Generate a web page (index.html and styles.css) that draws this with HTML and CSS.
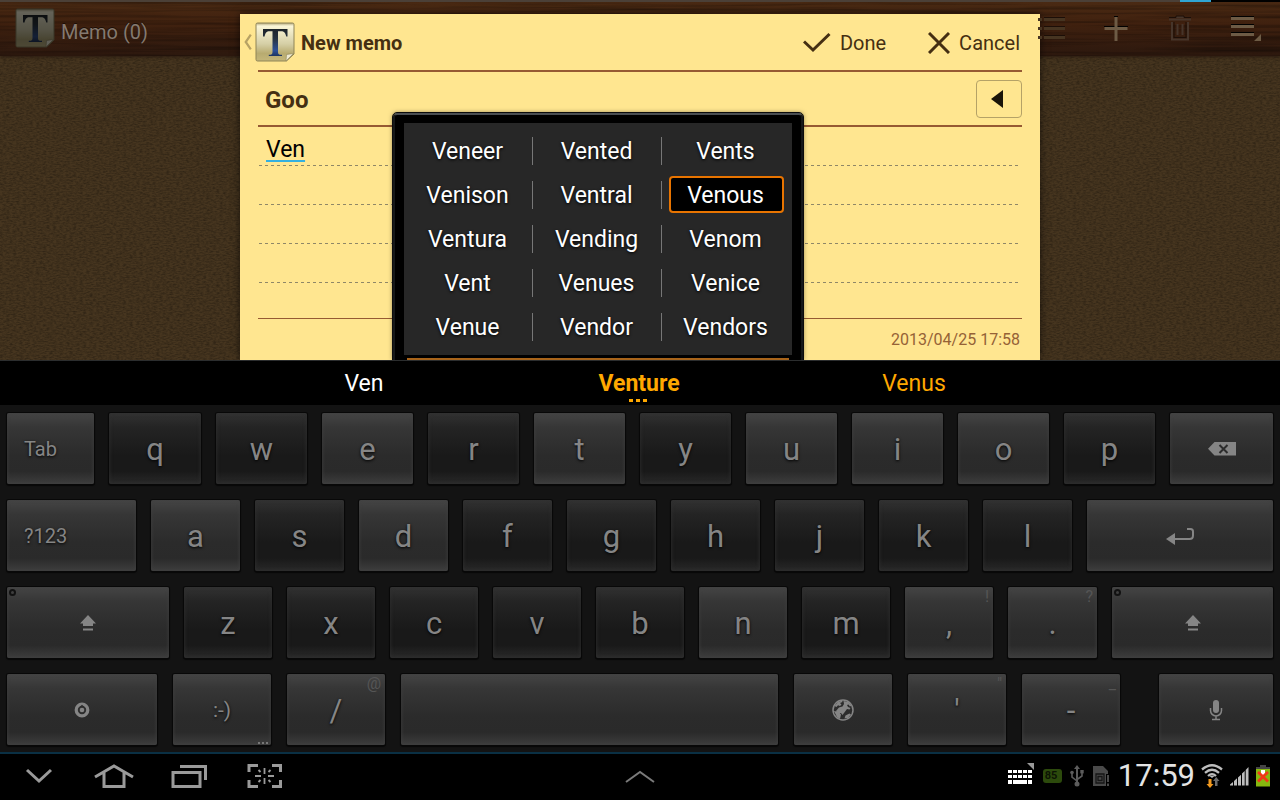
FILE: index.html
```html
<!DOCTYPE html>
<html lang="en">
<head>
<meta charset="utf-8">
<meta name="viewport" content="width=device-width, initial-scale=1">
<title>Memo</title>
<link rel="stylesheet" href="styles.css">
</head>
<body>
<svg class="defs" width="0" height="0" aria-hidden="true">
  <defs>
    <linearGradient id="paper" x1="0" y1="0" x2="0" y2="1">
      <stop offset="0" stop-color="#b3a77b"/><stop offset=".08" stop-color="#fbf6d8"/><stop offset=".55" stop-color="#d5cfa6"/><stop offset=".8" stop-color="#b8ab70"/><stop offset="1" stop-color="#c4b67a"/>
    </linearGradient>
    <linearGradient id="ink" x1="0" y1="0" x2="0" y2="1">
      <stop offset="0" stop-color="#1d2329"/><stop offset=".35" stop-color="#26323f"/><stop offset=".8" stop-color="#2a4f97"/><stop offset="1" stop-color="#1d3560"/>
    </linearGradient>
    <symbol id="memo-icon" viewBox="0 0 40 40">
      <path d="M2.500 1h35a1.500 1.500 0 0 1 1.500 1.500V32l-7.500 7h-29A1.500 1.500 0 0 1 1 37.500v-35A1.500 1.500 0 0 1 2.500 1z" fill="url(#paper)" stroke="#8e8456"/>
      <path d="M31 39l.5-6.500 7-1z" fill="#efead2" stroke="#8e8456" stroke-width=".6"/>
      <path d="M8 7h24.500v7.500h-1.300c-.7-3.700-2-5.300-5.200-5.300h-3v20.500c0 2.300.8 3 4 3.100V34H13.800v-1.200c3-.1 3.700-.8 3.700-3.100V9.200h-3c-3 0-4.200 1.600-4.900 5.300H8z" fill="url(#ink)"/>
    </symbol>
    <symbol id="shift-icon" viewBox="0 0 18 18">
      <path d="M9 1l8 8.500h-3V12H4V9.500H1z"/><path d="M4 14.500h10v2H4z"/>
    </symbol>
  </defs>
</svg>

<main class="stage">
  <svg class="texture cork" aria-hidden="true">
    <filter id="grain"><feTurbulence type="fractalNoise" baseFrequency=".3 .7" numOctaves="2" seed="4"/><feColorMatrix values="0 0 0 0 0  0 0 0 0 0  0 0 0 0 0  1.200 0 0 0 -.42"/></filter>
    <rect width="100%" height="100%" filter="url(#grain)"/>
  </svg>
  <header class="appbar">
    <svg class="texture wood" aria-hidden="true">
      <filter id="wood"><feTurbulence type="fractalNoise" baseFrequency=".006 .3" numOctaves="3" seed="8"/><feColorMatrix values="0 0 0 0 0  0 0 0 0 0  0 0 0 0 0  2 0 0 0 -.8"/></filter>
      <rect width="100%" height="100%" filter="url(#wood)"/>
    </svg>
    <svg class="app-icon" aria-hidden="true"><use href="#memo-icon"/></svg>
    <h1 class="app-title">Memo (0)</h1>
    <div class="app-actions">
      <button aria-label="List view"><svg width="28" height="28" viewBox="0 0 28 28" fill="#463421"><path d="M0 4h4v3H0zM6 4h21v3H6zM0 13h4v3H0zM6 13h21v3H6zM0 22h4v3H0zM6 22h21v3H6z"/><path d="M6 3h21v1H6zM6 12h21v1H6zM6 21h21v1H6z" fill="#1c0e07"/></svg></button>
      <button aria-label="Add memo"><svg width="28" height="28" viewBox="0 0 28 28"><path d="M12 2h4v1h-4zM2 12h24v1H2z" fill="#000"/><path d="M12.500 3h3v24h-3z" fill="#6d5b45"/><path d="M2.500 13h23v3h-23z" fill="#6d5b45"/></svg></button>
      <button aria-label="Delete"><svg width="28" height="28" viewBox="0 0 28 28" fill="none" stroke="#46352a" stroke-width="2"><path d="M3 5.500h22M10 3h8M6 8v17.500h16V8"/><path d="M11.500 10v11M16.500 10v11"/><path d="M3 3.500h7V2h8v1.500h7M8 8v15.500h12V8" stroke="#1c0e07" stroke-width="1"/></svg></button>
      <button aria-label="Menu"><svg width="32" height="28" viewBox="0 0 32 28" fill="#6d5b45"><path d="M1 3h23v3H1zM1 11h23v3H1zM1 19h23v3H1zM31 20v7h-7z"/><path d="M1 2h23v1H1zM1 10h23v1H1zM1 18h23v1H1z" fill="#000"/></svg></button>
    </div>
  </header>
  <div class="progress"></div>

  <section class="memo">
    <header class="memo-head">
      <svg class="back" viewBox="0 0 8 16" aria-hidden="true"><path d="M6.500 1.500L2 8l4.500 6.500" fill="none" stroke="#b7a264" stroke-width="2"/></svg>
      <svg class="app-icon" aria-hidden="true"><use href="#memo-icon"/></svg>
      <h2>New memo</h2>
      <button class="memo-action"><svg width="28" height="22" viewBox="0 0 28 22" fill="none" stroke="#452f12" stroke-width="3"><path d="M1 9.500l9 8.500L26.500 2"/></svg>Done</button>
      <button class="memo-action"><svg width="22" height="22" viewBox="0 0 22 22" fill="none" stroke="#452f12" stroke-width="3"><path d="M1 1l20 20M21 1L1 21"/></svg>Cancel</button>
    </header>
    <div class="memo-title">
      <input type="text" value="Goo" aria-label="Memo title">
      <button class="collapse" aria-label="Collapse"><svg width="12" height="18" viewBox="0 0 12 18"><path d="M12 0v18L0 9z" fill="#1a1408"/></svg></button>
    </div>
    <div class="memo-body" contenteditable="true" spellcheck="false" role="textbox" aria-label="Memo text">
      <p class="line"><span class="composing">Ven</span></p><p class="line"></p><p class="line"></p><p class="line"></p>
    </div>
    <time class="stamp">2013/04/25 17:58</time>
  </section>

  <section class="popup" aria-label="More suggestions">
    <div class="words">
      <button>Veneer</button><button>Vented</button><button>Vents</button>
      <button>Venison</button><button>Ventral</button><button class="selected">Venous</button>
      <button>Ventura</button><button>Vending</button><button>Venom</button>
      <button>Vent</button><button>Venues</button><button>Venice</button>
      <button>Venue</button><button>Vendor</button><button>Vendors</button>
    </div>
    <div class="popup-edge"></div>
  </section>
</main>

<section class="keyboard" aria-label="Keyboard">
  <div class="suggest">
    <button class="typed">Ven</button>
    <button class="best">Venture<i class="dots"></i></button>
    <button>Venus</button>
  </div>
  <div class="keys">
    <div class="row row-1">
      <button class="key lit label">Tab</button><button class="key">q</button><button class="key">w</button><button class="key lit">e</button><button class="key">r</button><button class="key lit">t</button><button class="key">y</button><button class="key lit">u</button><button class="key lit">i</button><button class="key lit">o</button><button class="key">p</button>
      <button class="key lit" aria-label="Backspace"><svg width="28" height="14" viewBox="0 0 28 14"><path d="M6.500 0H28v13.500H6.500L0 6.700z" fill="#858585"/><path d="M11.500 3l8 8M19.500 3l-8 8" stroke="#2c2c2c" stroke-width="2"/></svg></button>
    </div>
    <div class="row row-2">
      <button class="key lit label">?123</button><button class="key lit">a</button><button class="key">s</button><button class="key lit">d</button><button class="key">f</button><button class="key">g</button><button class="key">h</button><button class="key">j</button><button class="key">k</button><button class="key">l</button>
      <button class="key lit" aria-label="Enter"><svg width="28" height="18" viewBox="0 0 28 18"><path d="M0 12l9-6v12z" fill="#858585"/><path d="M9 12h14.500q3.500 0 3.500-3.500V4.500Q27 2 24.500 2H21" fill="none" stroke="#858585" stroke-width="2"/></svg></button>
    </div>
    <div class="row row-3">
      <button class="key lit" aria-label="Shift"><i class="led"></i><svg class="glyph" width="18" height="18"><use href="#shift-icon"/></svg></button><button class="key">z</button><button class="key">x</button><button class="key">c</button><button class="key">v</button><button class="key">b</button><button class="key lit">n</button><button class="key">m</button><button class="key lit">,<small>!</small></button><button class="key lit">.<small>?</small></button>
      <button class="key lit" aria-label="Shift"><i class="led"></i><svg class="glyph" width="18" height="18"><use href="#shift-icon"/></svg></button>
    </div>
    <div class="row row-4">
      <button class="key lit" aria-label="Keyboard settings"><svg width="16" height="16" viewBox="0 0 16 16"><circle cx="8" cy="8" r="5.800" fill="none" stroke="#858585" stroke-width="3.200"/><circle cx="8" cy="8" r="2.300" fill="#858585"/><path d="M8 2.800l2 2H6z" fill="#2c2c2c"/></svg></button>
      <button class="key lit smile">:-)<i class="more"></i></button>
      <button class="key lit">/<small>@</small></button>
      <button class="key lit" aria-label="Space"></button>
      <button class="key lit" aria-label="Language"><svg width="22" height="22" viewBox="0 0 22 22"><circle cx="11" cy="11" r="10" fill="#2c2c2c" stroke="#858585" stroke-width="1.500"/><path d="M2.500 7l3.500-4 4-1.500.5 1.500-2.500 1 1.500 1.500L8 7l-2-.8L4.500 8z M11.500 2l5 1 3 3.500-1.500 1-1.500-2-1.500.5 1 2 2.500 1-1 1.500-2.500-.5-3 4-1.500 2-1.500-2-3-.5L4 12l3-3.500 3.500-1 1.500-2.500z M2 12l5 1 2 2.500-1 4.500-3-2z M12.500 19.500l1-3 4-2 1.500 1-3 3.500z" fill="#858585"/></svg></button>
      <button class="key lit">'<small>"</small></button>
      <button class="key lit">-<small>_</small></button>
      <button class="key lit mic" aria-label="Voice input"><svg width="14" height="22" viewBox="0 0 14 22"><rect x="4" y="1" width="6" height="13" rx="3" fill="#858585"/><path d="M1.500 9v2.500a5.500 5.500 0 0 0 11 0V9M7 17v3M3 20.500h8" fill="none" stroke="#858585" stroke-width="1.500"/></svg></button>
    </div>
  </div>
</section>

<nav class="sysbar" aria-label="System">
  <div class="nav-left">
    <button aria-label="Hide keyboard"><svg width="40" height="26" viewBox="0 0 40 26" fill="none" stroke="#9a9a9a" stroke-width="3"><path d="M8 7l12 11L32 7"/></svg></button>
    <button aria-label="Home"><svg width="40" height="26" viewBox="0 0 40 26" fill="none" stroke="#9a9a9a" stroke-width="3"><path d="M1 14L20 3l19 11M10 9v14.500h20V9"/></svg></button>
    <button aria-label="Recent apps"><svg width="40" height="26" viewBox="0 0 40 26" fill="none" stroke="#9a9a9a" stroke-width="3"><path d="M4 9.500h27v14H4zM11 3.500h25.500V17"/></svg></button>
    <button aria-label="Screenshot"><svg width="40" height="26" viewBox="0 0 40 26" fill="none" stroke="#9a9a9a" stroke-width="3"><path d="M5 9V2.500h9M28 2.500h8.500V9M5 17v6.500h9M28 23.500h8.500V17"/><path d="M20.500 5v6M20.500 15v6M11 13h6M24 13h6M14.500 7l2 2M26.500 7l-2 2M14.500 19l2-2M26.500 19l-2-2" stroke-width="1.800"/></svg></button>
  </div>
  <button class="tray" aria-label="Open app tray"><svg width="32" height="14" viewBox="0 0 32 14" fill="none" stroke="#7a7a7a" stroke-width="2"><path d="M2 12L16 2l14 10"/></svg></button>
  <div class="status">
    <div class="notices">
      <svg width="28" height="26" viewBox="0 0 28 26" fill="#fff"><path d="M20 0h7v7z" fill="#999"/><path d="M1 7h4v3H1zM6 7h4v3H6zM11 7h4v3h-4zM16 7h4v3h-4zM21 7h4v3h-4zM1 12h4v3H1zM6 12h4v3H6zM11 12h4v3h-4zM16 12h4v3h-4zM21 12h4v3h-4zM1 17h4v4H1zM6 17h14v4H6zM21 17h4v4h-4z"/></svg>
      <span class="level">85</span>
      <svg width="14" height="22" viewBox="0 0 14 22" fill="#5c5c5c"><path d="M7 0l3 4H8v14H6V4H4z"/><circle cx="7" cy="19" r="2.500"/><path d="M2 8v4l5 4M12 7v4l-5 3.500" fill="none" stroke="#5c5c5c" stroke-width="1.600"/><circle cx="2" cy="7.500" r="1.800"/><path d="M10.300 5h3.400v3.400h-3.400z"/></svg>
      <svg width="18" height="22" viewBox="0 0 18 22"><path d="M1 1h10l5 5v3h-2v12H1z" fill="#4a4a4a"/><path d="M4 9h8v9H4zM6 11.500h4v4H6z" fill="#4a4a4a" stroke="#161616" stroke-width="1.300"/><path d="M15 10h2v7h-2zM15 18.500h2V21h-2z" fill="#4a4a4a"/></svg>
    </div>
    <time class="clock">17:59</time>
    <svg width="22" height="26" viewBox="0 0 22 26" fill="none"><path d="M1 6.500Q11-2 21 6.500M4 9.800q7-6 14 0M7 13q4-3.500 8 0" stroke="#bdbdbd" stroke-width="2.300"/><path d="M11 15l-2.500-2h5z" fill="#bdbdbd"/><path d="M7.500 16h3v5h2L9 25l-3.500-4h2z" fill="#f39a1f"/><path d="M14 23v-5h-2l3.200-4 3.300 4h-2v5z" fill="#6c6c6c"/></svg>
    <svg width="20" height="20" viewBox="0 0 20 20" fill="#bdbdbd"><path d="M1 18.500l3-2.500v3.500H1zM5 15l3-2.700v7.200H5zM9 11.500l3-2.800v10.800H9zM13 7.500l2.700-2.500v14.500H13zM16.700 4L19.500 1v18.500h-2.800z"/></svg>
    <svg width="16" height="22" viewBox="0 0 16 22"><path d="M5 0h6v2h4v3H1V2h4z" fill="#454545"/><path d="M1 4h14v17.500H1z" fill="#86b80f"/><path d="M6 5h4v6H6z" fill="#fff"/><path d="M3 7l10 9.500M13 7L3 16.500" stroke="#f03a17" stroke-width="2.800"/></svg>
  </div>
</nav>
</body>
</html>
```
FILE: styles.css
```css
* { box-sizing: border-box; }

body {
  margin: 0;
  min-height: 100vh;
  display: flex;
  flex-direction: column;
  overflow: hidden;
  background: #000;
  font-family: Roboto, "Liberation Sans", sans-serif;
}

h1, h2, p { margin: 0; font-weight: 400; }

button, input {
  padding: 0;
  border: 0;
  background: none;
  color: inherit;
  font: inherit;
}

svg { display: block; flex: none; }
.defs { position: absolute; }

/* Memo app */
.stage {
  position: relative;
  flex: 1;
  display: flex;
  flex-direction: column;
  align-items: center;
  overflow: hidden;
  background: #46351f;
}

.texture {
  position: absolute;
  inset: 0;
  width: 100%;
  height: 100%;
}

.cork { opacity: .5; }
.wood { opacity: .35; }

.appbar {
  position: absolute;
  inset: 0 0 auto;
  height: 56px;
  display: flex;
  align-items: center;
  padding: 0 18px 3px 15px;
  background: linear-gradient(#4a2a13, #40210f 40%, #2c180e);
  border-top: 2px solid #4b4037;
  box-shadow: 0 1px 3px #2a1b10;
}

.appbar > * { z-index: 1; }
.appbar > .texture { z-index: 0; }
.app-icon { width: 40px; height: 40px; }
.appbar .app-icon { filter: brightness(.4) saturate(.8); }

.app-title {
  margin-left: 6px;
  padding-top: 8px;
  font-size: 20px;
  color: #857a70;
  text-shadow: 0 -1px #1c0e07;
}

.app-actions {
  margin-left: auto;
  display: flex;
  gap: 36px;
}

.progress {
  position: absolute;
  top: 0;
  right: 0;
  width: 100px;
  height: 2px;
  background: linear-gradient(90deg, #2fa5d3 31px, #000 31px);
}

.memo {
  position: relative;
  flex: 1;
  width: 800px;
  max-width: 100%;
  margin-top: 14px;
  padding: 0 18px;
  display: flex;
  flex-direction: column;
  background: #ffe690;
  color: #452f12;
  box-shadow: 0 0 8px #0009;
}

.memo-head {
  height: 56px;
  margin-left: -15px;
  display: flex;
  align-items: center;
  font-size: 20px;
}

.back { width: 10px; height: 18px; margin-right: 2px; }

.memo-head h2 {
  flex: 1;
  margin-left: 6px;
  padding-top: 2px;
  font-size: 20px;
  font-weight: 700;
}

.memo-action {
  display: flex;
  align-items: center;
  gap: 9px;
  margin-left: 40px;
  padding: 2px 2px 0 0;
}

.memo-title {
  height: 57px;
  display: flex;
  align-items: center;
  border: solid #965a33;
  border-width: 2px 0;
}

.memo-title input {
  flex: 1;
  min-width: 0;
  padding: 2px 0 0 7px;
  font-size: 24px;
  font-weight: 700;
  outline: 0;
}

.collapse {
  width: 46px;
  height: 38px;
  display: grid;
  place-items: center;
  padding-right: 4px;
  border: 1px solid #b5a267;
  border-radius: 4px;
}

.memo-body {
  flex: 1;
  font-size: 23px;
  color: #000;
  outline: 0;
}

.line {
  height: 39px;
  padding: 0 8px;
  line-height: 46px;
  background: repeating-linear-gradient(90deg, #8f8767 0 3px, transparent 3px 6px) 1px 100% / calc(100% - 3px) 1px no-repeat;
}

.composing {
  text-decoration: underline 2px #33b0e0;
  text-underline-offset: 3px;
}

.stamp {
  padding: 11px 2px 10px;
  border-top: 1px solid #965a33;
  font-size: 16px;
  line-height: 20px;
  text-align: right;
  color: #956236;
}

/* Extended suggestion list */
.popup {
  position: absolute;
  bottom: 0;
  left: 50%;
  width: 410px;
  margin-left: -247px;
  padding: 8px 9px 0;
  background: #000;
  border: 2px solid #16181a;
  border-top-color: #4a4e52;
  border-bottom: 0;
  border-radius: 4px 4px 0 0;
  outline: 1px solid #0c0c0c;
  box-shadow: 0 0 5px #0008;
}

.words {
  display: grid;
  grid-template-columns: repeat(3, 1fr);
  padding: 6px 1px 6px 0;
  background: #272727;
}

.words button {
  position: relative;
  height: 44px;
  padding-right: 2px;
  font-size: 23px;
  color: #fff;
  text-shadow: 0 1px 3px #000;
}

.words button:not(:nth-child(3n))::after {
  content: "";
  position: absolute;
  top: 8px;
  right: 0;
  width: 1px;
  height: 28px;
  background: #777;
}

.words .selected {
  height: 37px;
  margin: 3px 7px;
  padding-top: 1px;
  background: #000;
  border: 2px solid #e87400;
  border-radius: 4px;
}

.popup-edge {
  height: 2px;
  margin: 3px 3px 0;
  background: #a8641a;
}

/* Keyboard */
.keyboard { background: #131313; }

.suggest {
  height: 45px;
  display: grid;
  grid-template-columns: 275px 275px 275px;
  justify-content: center;
  padding-right: 2px;
  border-top: 1px solid #2b2d2e;
  background: #000;
  font-size: 23px;
  color: #ffa800;
}

.suggest .typed { color: #fff; }
.suggest .best { position: relative; font-weight: 700; }

.dots {
  position: absolute;
  bottom: 3px;
  left: 50%;
  width: 18px;
  height: 3px;
  margin-left: -10px;
  background: repeating-linear-gradient(90deg, #ffa800 0 4px, transparent 4px 7px);
}

.keys {
  display: grid;
  gap: 16px;
  padding: 8px 7px 7px;
}

.row { display: grid; gap: 15px; }
.row-1 { grid-template-columns: 87fr 92fr repeat(9, 91fr) 103fr; }
.row-2 { grid-template-columns: 129fr repeat(9, 89fr) 186fr; }
.row-3 { grid-template-columns: 162fr repeat(8, 88fr) 89fr 161fr; }
.row-4 { grid-template-columns: 150fr 98fr 98fr 377fr 98fr 98fr 98fr 137fr; gap: 16px; }

.key {
  position: relative;
  min-width: 0;
  height: 71px;
  display: flex;
  align-items: center;
  justify-content: center;
  padding-top: 1px;
  border-radius: 2px;
  background: linear-gradient(#323232, #242424 20%, #191919 60%, #191919 82%, #292929);
  box-shadow: 0 0 0 1px #080808, 0 1px 1px 1px #0009, inset 0 0 4px #303030;
  font-size: 31px;
  color: #858585;
  text-shadow: 0 1px 3px #000;
}

.key.lit {
  background: linear-gradient(#454545, #363636 20%, #2b2b2b 60%, #2a2a2a 82%, #3d3d3d);
  box-shadow: 0 0 0 1px #080808, 0 1px 1px 1px #0009, inset 0 0 4px #404040;
}

.key.label {
  justify-content: flex-start;
  padding-left: 17px;
  font-size: 20px;
}

.key.smile { font-size: 21px; }
.key.mic { margin-left: 23px; }
.glyph { fill: #858585; }

.key small {
  position: absolute;
  top: 0;
  right: 4px;
  font-size: 16px;
  line-height: 20px;
  color: #555;
  text-shadow: none;
}

.led {
  position: absolute;
  top: 2px;
  left: 2px;
  width: 7px;
  height: 7px;
  border: 2px solid #111;
  border-radius: 50%;
}

.more {
  position: absolute;
  right: 3px;
  bottom: 1px;
  width: 10px;
  height: 2px;
  background: repeating-linear-gradient(90deg, #777 0 2px, transparent 2px 4px);
}

/* System bar */
.sysbar {
  height: 48px;
  display: grid;
  grid-template-columns: 1fr auto 1fr;
  align-items: center;
  padding: 0 9px;
  border-top: 2px solid #0a3044;
  background: #000;
}

.nav-left { display: flex; gap: 35px; padding: 0 0 2px 10px; }

.status,
.notices {
  display: flex;
  align-items: center;
  justify-content: flex-end;
  gap: 8px;
}

.status { gap: 6px; padding-bottom: 2px; }

.level {
  width: 19px;
  padding: 0 2px;
  border-radius: 3px;
  background: #2c4a0c;
  font-size: 11px;
  font-weight: 700;
  line-height: 14px;
  color: #0c1404;
}

.clock {
  padding-left: 2px;
  font-size: 31px;
  line-height: 40px;
  color: #e4e4e4;
}
```
